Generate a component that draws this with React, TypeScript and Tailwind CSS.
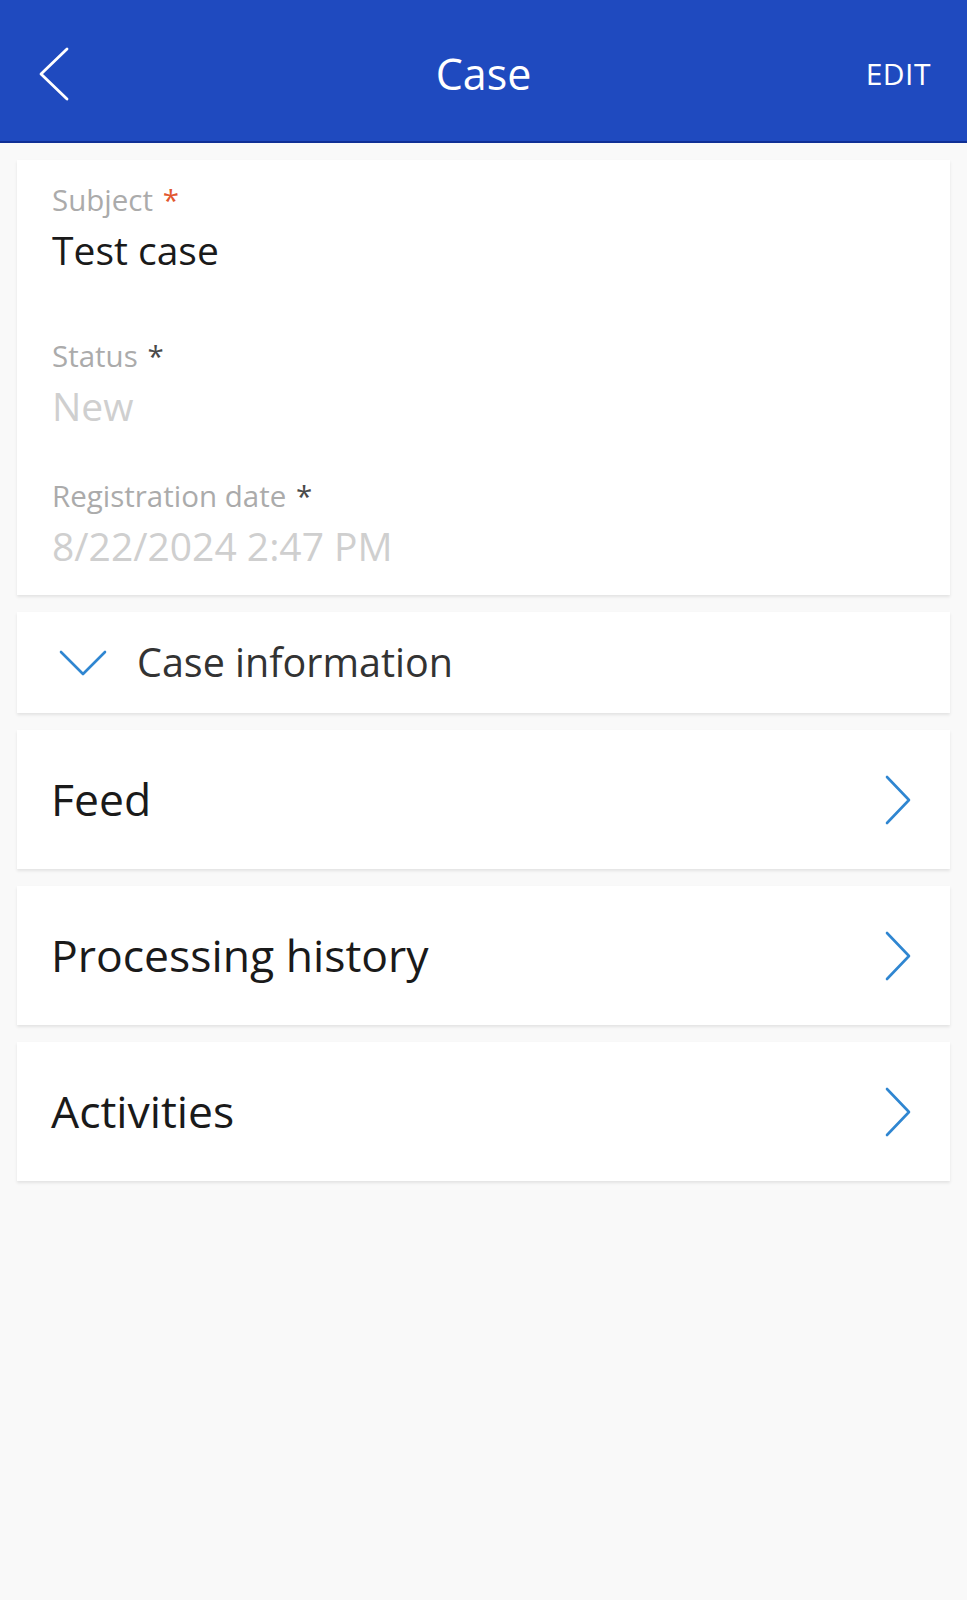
const font = { fontFamily: '"Open Sans", "Noto Sans", sans-serif' };

const fields = [
  { label: "Subject", value: "Test case", required: "text-[#e2572f]", valueColor: "text-[#1a1a1a]" },
  { label: "Status", value: "New", required: "text-[#4a4a4a]", valueColor: "text-[#cfcfcf]" },
  { label: "Registration date", value: "8/22/2024 2:47 PM", required: "text-[#4a4a4a]", valueColor: "text-[#cfcfcf]" },
];

const links = ["Feed", "Processing history", "Activities"];

const ChevronRightThin = () => (
  <svg width="30" height="50" viewBox="0 0 30 50" fill="none">
    <path d="M4 2 L26 25 L4 48" stroke="#2f86d1" strokeWidth="2.6" strokeLinecap="round" strokeLinejoin="round" />
  </svg>
);

const ChevronDownThin = () => (
  <svg width="48" height="28" viewBox="0 0 48 28" fill="none">
    <path d="M2 3 L24 25 L46 3" stroke="#2f86d1" strokeWidth="2.6" strokeLinecap="round" strokeLinejoin="round" />
  </svg>
);

const BackChevron = () => (
  <svg width="32" height="54" viewBox="0 0 32 54" fill="none">
    <path d="M29 2 L3 27 L29 52" stroke="#ffffff" strokeWidth="2.8" strokeLinecap="round" strokeLinejoin="round" />
  </svg>
);

const card = "bg-white shadow-[0_2px_3px_rgba(0,0,0,0.09)]";

export default function App() {
  return (
    <div className="min-h-[1600px] bg-[#f9f9f9]" style={font}>
      <header className="h-[143px] bg-[#1f4abf] border-b-2 border-[#0f2f95] flex items-center justify-between pt-[6px] pl-[38px] pr-[36px] relative">
        <BackChevron />
        <h1 className="absolute left-0 right-0 text-center text-white text-[43px] leading-none pointer-events-none">Case</h1>
        <span className="text-white text-[30px] tracking-[0.5px]">EDIT</span>
      </header>

      <main className="flex flex-col gap-[17px] px-[17px] pt-[17px]">
        <section className={`${card} pl-[35px] pt-[20px] pb-[23px]`}>
          {fields.map((f, i) => (
            <div key={f.label} className={i === 1 ? "mt-[60px]" : i === 2 ? "mt-[44px]" : ""}>
              <div className="text-[29.5px] leading-[40px] text-[#ababab]">
                {f.label} <span className={`${f.required} ml-[2px]`}>*</span>
              </div>
              <div className={`mt-[3px] text-[39px] leading-[53px] ${f.valueColor}`}>{f.value}</div>
            </div>
          ))}
        </section>

        <section className={`${card} h-[101px] flex items-center pl-[42px]`}>
          <ChevronDownThin />
          <span className="ml-[30px] text-[39.5px] text-[#333333] leading-none">Case information</span>
        </section>

        {links.map((l) => (
          <section key={l} className={`${card} h-[139px] flex items-center justify-between pl-[34px] pr-[37px]`}>
            <span className="text-[44.5px] text-[#1a1a1a] leading-none">{l}</span>
            <ChevronRightThin />
          </section>
        ))}
      </main>
    </div>
  );
}
